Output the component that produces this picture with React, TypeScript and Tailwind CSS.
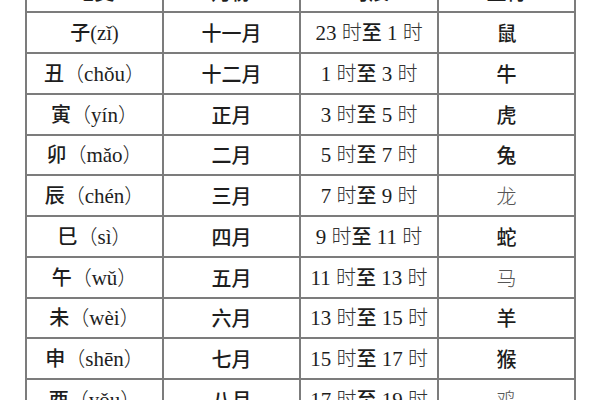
const serif = "font-['Liberation_Serif','Times_New_Roman','Noto_Sans_CJK_SC',serif]";
const sans = "font-['Noto_Sans_CJK_SC','Noto_Sans',sans-serif]";

type Row = {
  branch: string;
  pinyin: string;
  full: boolean;
  month: string;
  from: string;
  to: string;
  animal: string;
  light?: boolean;
  h: string;
};

const rows: Row[] = [
  { branch: "地支", pinyin: "", full: false, month: "月份", from: "", to: "", animal: "生肖", h: "h-[41px]" },
  { branch: "子", pinyin: "zǐ", full: false, month: "十一月", from: "23", to: "1", animal: "鼠", h: "h-[41px]" },
  { branch: "丑", pinyin: "chǒu", full: true, month: "十二月", from: "1", to: "3", animal: "牛", h: "h-[41px]" },
  { branch: "寅", pinyin: "yín", full: true, month: "正月", from: "3", to: "5", animal: "虎", h: "h-[41px]" },
  { branch: "卯", pinyin: "mǎo", full: true, month: "二月", from: "5", to: "7", animal: "兔", h: "h-[40px]" },
  { branch: "辰", pinyin: "chén", full: true, month: "三月", from: "7", to: "9", animal: "龙", light: true, h: "h-[41px]" },
  { branch: "巳", pinyin: "sì", full: true, month: "四月", from: "9", to: "11", animal: "蛇", h: "h-[41px]" },
  { branch: "午", pinyin: "wǔ", full: true, month: "五月", from: "11", to: "13", animal: "马", light: true, h: "h-[41px]" },
  { branch: "未", pinyin: "wèi", full: true, month: "六月", from: "13", to: "15", animal: "羊", h: "h-[40px]" },
  { branch: "申", pinyin: "shēn", full: true, month: "七月", from: "15", to: "17", animal: "猴", h: "h-[41px]" },
  { branch: "酉", pinyin: "yǒu", full: true, month: "八月", from: "17", to: "19", animal: "鸡", light: true, h: "h-[41px]" },
];

function Cell({ children, w }: { children: React.ReactNode; w: string }) {
  return (
    <div className={`${w} flex items-center justify-center border-r-2 border-b-2 border-[#7c7c7c] text-[20px] leading-none text-[#1e1e1e]`}>
      {children}
    </div>
  );
}

export default function App() {
  return (
    <div className="h-[400px] w-[600px] overflow-hidden bg-white">
      <div className="-mt-[28px] ml-[25px] w-[551px] border-l-2 border-[#7c7c7c]">
        {rows.map((r, i) => (
          <div key={i} className={`flex ${r.h}`}>
            <Cell w="w-[137px]">
              {i === 0 ? (
                <span className={`${sans} font-medium`}>{r.branch}</span>
              ) : (
                <span className="flex items-baseline">
                  <span className={`${sans} font-medium`}>{r.branch}</span>
                  {r.full ? (
                    <span className={`${sans} font-light`}>（</span>
                  ) : (
                    <span className={serif}>(</span>
                  )}
                  <span className={`${serif} text-[21px]`}>{r.pinyin}</span>
                  {r.full ? (
                    <span className={`${sans} font-light`}>）</span>
                  ) : (
                    <span className={serif}>)</span>
                  )}
                </span>
              )}
            </Cell>
            <Cell w="w-[137px]">
              <span className={`${sans} font-medium`}>{r.month}</span>
            </Cell>
            <Cell w="w-[138px]">
              {i === 0 ? (
                <span className={`${sans} font-medium`}>时辰</span>
              ) : (
                <span className="flex items-baseline">
                  <span className={`${serif} text-[21px]`}>{r.from}&nbsp;</span>
                  <span className={`${sans} font-light text-[#333]`}>时</span>
                  <span className={`${sans} font-medium`}>至</span>
                  <span className={`${serif} text-[21px]`}>&nbsp;{r.to}&nbsp;</span>
                  <span className={`${sans} font-light text-[#333]`}>时</span>
                </span>
              )}
            </Cell>
            <Cell w="w-[137px]">
              <span className={`${sans} ${r.light ? "font-light text-[#555]" : "font-medium"}`}>{r.animal}</span>
            </Cell>
          </div>
        ))}
      </div>
    </div>
  );
}
